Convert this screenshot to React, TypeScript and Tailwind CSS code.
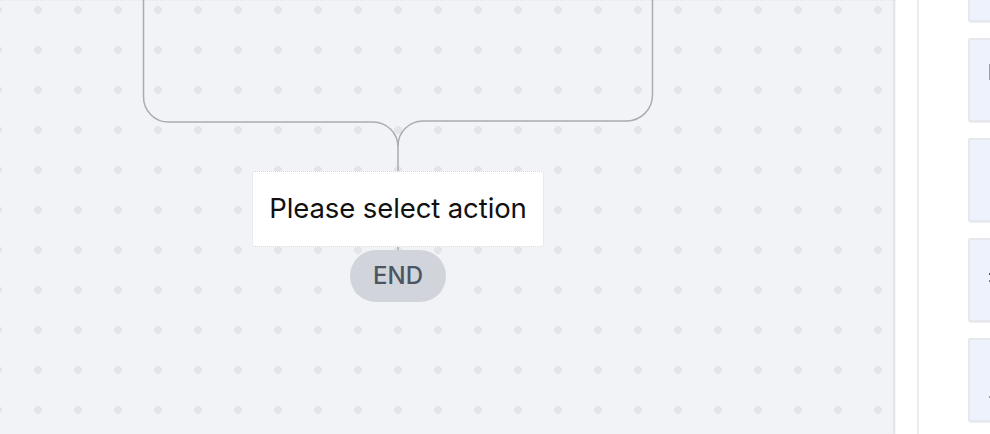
import React from "react";

const font = { fontFamily: "Inter, 'Noto Sans', sans-serif" };

function Card({ mark }: { mark?: "bar" | "dots" | "dash" | "none" }) {
  return (
    <div className="relative h-[84px] w-[60px] shrink-0 rounded-[2px] border-2 border-[#e6e8ee] bg-[#eef2fd] shadow-[0_2px_0_-1px_#eceef2]">
      {mark === "bar" && <div className="absolute left-[19px] top-[24px] h-[16px] w-[2px] bg-[#9aa0aa]" />}
      {mark === "dots" && (
        <div className="absolute left-[19px] top-[33px] flex flex-col gap-[5px]">
          <div className="h-[2px] w-[2px] bg-[#555]" />
          <div className="h-[2px] w-[2px] bg-[#888]" />
        </div>
      )}
      {mark === "dash" && <div className="absolute left-[19px] top-[56px] h-[2px] w-[2px] bg-[#999]" />}
    </div>
  );
}

export default function App() {
  return (
    <div className="flex h-[434px] w-[990px] overflow-hidden bg-white" style={font}>
      <div className="relative h-full w-[893px] shrink-0 bg-[#f2f3f7] bg-[radial-gradient(circle,#e4e5e9_3.8px,transparent_4.3px)] bg-[length:40px_40px] bg-[position:18px_-10px]">
        <div className="absolute left-0 top-0 h-[1px] w-full border-t border-dotted border-[#e6e7ea]" />
        <svg className="absolute left-0 top-0" width="893" height="434" fill="none">
          <path
            d="M143.5 0 V97 A25 25 0 0 0 168.5 122 H373 A25 25 0 0 1 398 147 V171"
            stroke="#abacb2"
            strokeWidth="1.5"
          />
          <path
            d="M652.5 0 V95 A26 26 0 0 1 626.5 121 H423 A25 25 0 0 0 398 146"
            stroke="#abacb2"
            strokeWidth="1.5"
          />
          <path d="M398 247 V251" stroke="#abacb2" strokeWidth="1.5" />
        </svg>
        <div className="absolute left-[252px] top-[171px] flex h-[76px] w-[292px] items-center justify-center rounded-[3px] border border-dotted border-[#d4d6db] bg-white">
          <span className="text-[27.5px] leading-none tracking-[-0.1px] text-[#111]">Please select action</span>
        </div>
        <div className="absolute left-[350px] top-[250px] flex h-[52px] w-[96px] items-center justify-center rounded-full bg-[#d1d5db]">
          <span className="text-[24px] font-medium leading-none text-[#4b5563]">END</span>
        </div>
      </div>
      <div className="h-full w-[2px] shrink-0 bg-[#e4e5e9]" />
      <div className="h-full w-[22px] shrink-0 border-l border-dotted border-[#eceef1] bg-white" />
      <div className="h-full w-[2px] shrink-0 bg-[#ececee]" />
      <div className="flex h-full flex-1 flex-col gap-[16px] bg-white pl-[49px] pt-0">
        <div className="-mt-[62px] flex flex-col gap-[16px]">
          <Card mark="none" />
          <Card mark="bar" />
          <Card mark="none" />
          <Card mark="dots" />
          <Card mark="dash" />
        </div>
      </div>
    </div>
  );
}
